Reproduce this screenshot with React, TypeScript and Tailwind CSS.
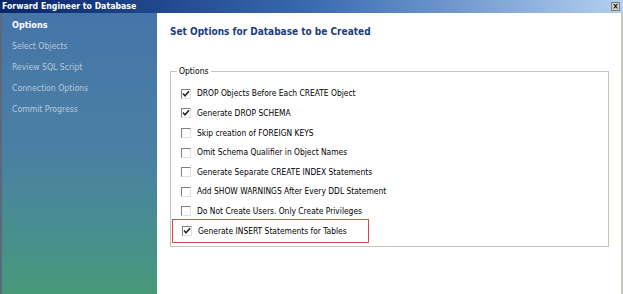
const steps = [
  { label: 'Options', active: true },
  { label: 'Select Objects' },
  { label: 'Review SQL Script' },
  { label: 'Connection Options' },
  { label: 'Commit Progress' },
];

const options = [
  { label: 'DROP Objects Before Each CREATE Object', checked: true },
  { label: 'Generate DROP SCHEMA', checked: true },
  { label: 'Skip creation of FOREIGN KEYS' },
  { label: 'Omit Schema Qualifier in Object Names' },
  { label: 'Generate Separate CREATE INDEX Statements' },
  { label: 'Add SHOW WARNINGS After Every DDL Statement' },
  { label: 'Do Not Create Users. Only Create Privileges' },
  { label: 'Generate INSERT Statements for Tables', checked: true, highlight: true },
];

function CheckBox({ checked }: { checked?: boolean }) {
  return (
    <span className="w-[10px] h-[10px] shrink-0 border border-t-[#808080] border-l-[#808080] border-r-[#e0e0e0] border-b-[#e0e0e0] bg-white flex items-center justify-center">
      {checked && (
        <svg width="8" height="8" viewBox="0 0 8 8">
          <path d="M1 3.5 L3 5.8 L7 1.2" fill="none" stroke="#222" strokeWidth="1.5" />
        </svg>
      )}
    </span>
  );
}

export default function App() {
  return (
    <div className="w-[623px] h-[294px] flex flex-col bg-[#d4d0c8] overflow-hidden font-['DejaVu_Sans_Condensed','DejaVu_Sans',sans-serif] [font-stretch:condensed]">
      <div className="h-[13px] flex items-center justify-between bg-gradient-to-r from-[#0a246a] via-[#3a6ab0] to-[#b4d0f0] pl-[2px] pr-[3px]">
        <span className="text-[8.7px] leading-none font-bold text-white">Forward Engineer to Database</span>
        <span className="w-[9px] h-[9px] bg-[#d4d0c8] border border-[#808080] flex items-center justify-center text-[8px] leading-none text-black font-bold">×</span>
      </div>

      <div className="flex-1 flex">
        <div className="w-[157px] border-l-2 border-[#5a6a7a] bg-gradient-to-b from-[#4674a8] via-[#4a80a4] to-[#47997a] pt-[2px] pl-[10px]">
          {steps.map((s) => (
            <div
              key={s.label}
              className={`h-[21px] flex items-center ${s.active ? 'text-[9px] font-bold text-white' : 'text-[8.6px] text-[#b8c8d8]'}`}
            >
              {s.label}
            </div>
          ))}
        </div>

        <div className="w-[464px] bg-white pl-[13px] pr-[12px]">
          <h1 className="text-[10px] font-bold text-[#1c3c84] pt-[12px] leading-[14px]">
            Set Options for Database to be Created
          </h1>

          <div className="relative mt-[32px] h-[176px] border border-[#c4c4c0] pt-[12px] pl-[9px]">
            <span className="absolute -top-[7px] left-[6px] bg-white px-[2px] text-[8.5px] leading-[12px] text-black">
              Options
            </span>
            <div className="flex flex-col">
              {options.map((o) => (
                <div
                  key={o.label}
                  className={`flex items-center gap-[6px] w-[197px] -ml-[8px] pl-[9px] ${o.highlight ? 'h-[23.6px] -my-[2px] border border-[#e04848]' : 'h-[19.6px]'}`}
                >
                  <CheckBox checked={o.checked} />
                  <span className="text-[8.4px] text-black whitespace-nowrap">{o.label}</span>
                </div>
              ))}
            </div>
          </div>
        </div>

        <div className="w-[2px] bg-[#c8c8c0]" />
      </div>
    </div>
  );
}
